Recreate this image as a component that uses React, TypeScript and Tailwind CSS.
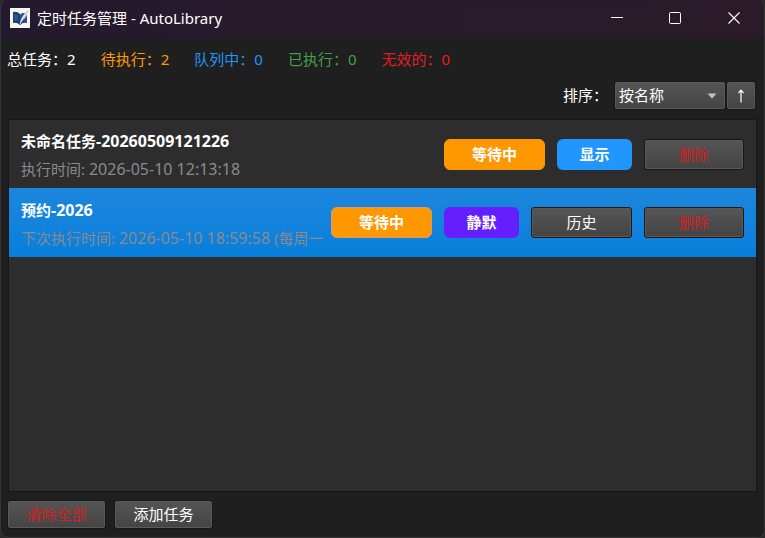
import { useState } from "react";
import { clsx } from "clsx";

type Task = {
  name: string;
  timeLabel: string;
  time: string;
  repeat?: string;
  mode: "显示" | "静默";
  history: boolean;
};

const TASKS: Task[] = [
  {
    name: "未命名任务-20260509121226",
    timeLabel: "执行时间",
    time: "2026-05-10 12:13:18",
    mode: "显示",
    history: false,
  },
  {
    name: "预约-2026",
    timeLabel: "下次执行时间",
    time: "2026-05-10 18:59:58",
    repeat: "(每周一",
    mode: "静默",
    history: true,
  },
];

const STATS = [
  { label: "总任务", value: 2, color: "text-white" },
  { label: "待执行", value: 2, color: "text-[#ff9800]" },
  { label: "队列中", value: 0, color: "text-[#2196f3]" },
  { label: "已执行", value: 0, color: "text-[#43a047]" },
  { label: "无效的", value: 0, color: "text-[#e51c23]" },
];

const BUTTON =
  "shrink-0 rounded-[3px] border border-[#171717] bg-linear-to-b from-[#555555] to-[#444444] text-center inset-ring inset-ring-[#5a5a5a]";

function AppLogo() {
  return (
    <svg width="20" height="20" viewBox="0 0 20 20" aria-hidden="true">
      <rect width="20" height="20" fill="#f6f6ee" />
      <path d="M3 4 Q7 3 10 6 V17 Q7 14 3 15 Z" fill="#1f3f73" />
      <path d="M10 7 Q11 5 13 5 L17 5 V15 Q13 14 10 17 Z" fill="#274f88" />
      <path d="M10 15 Q11 8 18 2 Q18 8 13 12 Z" fill="#b9c8dc" />
      <path d="M10 16 Q12 10 17 4" fill="none" stroke="#f6f6ee" strokeWidth="0.8" />
      <path d="M4 6 L8 7 V13 L4 12 Z" fill="#28548f" />
    </svg>
  );
}

function TitleBar() {
  return (
    <header className="flex h-[37px] items-center bg-linear-to-r from-[#241a2d] to-[#2b1b28] pb-[3px] pl-[9px]">
      <AppLogo />
      <h1 className="flex-1 pl-[7px] text-[15px]">定时任务管理 - AutoLibrary</h1>
      <button aria-label="最小化" className="flex h-full w-[58px] items-center justify-center">
        <svg width="12" height="12" viewBox="0 0 12 12" fill="none" stroke="#fff">
          <path d="M0 5.5 H12" />
        </svg>
      </button>
      <button aria-label="最大化" className="flex h-full w-[58px] items-center justify-center">
        <svg width="12" height="12" viewBox="0 0 12 12" fill="none" stroke="#fff">
          <rect x="0.5" y="0.5" width="11" height="11" rx="1" />
        </svg>
      </button>
      <button aria-label="关闭" className="flex h-full w-[60px] items-center justify-center">
        <svg width="12" height="12" viewBox="0 0 12 12" fill="none" stroke="#fff" strokeWidth="1.1">
          <path d="M0.5 0.5 L11.5 11.5 M11.5 0.5 L0.5 11.5" />
        </svg>
      </button>
    </header>
  );
}

function TaskRow({ task, selected, onSelect }: { task: Task; selected: boolean; onSelect: () => void }) {
  const [title, digits] = task.name.split("-");
  return (
    <li
      onClick={onSelect}
      className={clsx(
        "flex items-center gap-3 px-3",
        selected ? "h-[69px] bg-linear-to-b from-[#1c86dc] to-[#067fdb]" : "h-[68px]"
      )}
    >
      <div className="flex min-w-0 flex-1 flex-col gap-1 pt-[2px] whitespace-nowrap">
        <div className="h-6 leading-6 font-bold">
          {title}
          <span className="text-base leading-6">-{digits}</span>
        </div>
        <div className="h-6 leading-6 text-[#8a8a8e]">
          {task.timeLabel}: <span className="text-base leading-6">{task.time}</span> {task.repeat}
        </div>
      </div>
      <span
        className={clsx(
          "h-[31px] w-[101px] shrink-0 rounded-md border bg-[#ff9800] text-center leading-[29px] font-bold",
          selected ? "border-[#dc9a6c]" : "border-[#ff9800]"
        )}
      >
        等待中
      </span>
      <span
        className={clsx(
          "h-[31px] w-[75px] shrink-0 rounded-md text-center leading-[31px] font-bold",
          task.mode === "显示" ? "bg-[#2196ff]" : "bg-[#651fff]"
        )}
      >
        {task.mode}
      </span>
      {task.history && <button className={clsx(BUTTON, "h-[31px] w-[101px]")}>历史</button>}
      <button className={clsx(BUTTON, "h-[31px] w-[100px] text-[#d32020]")}>删除</button>
    </li>
  );
}

export default function App() {
  const [selected, setSelected] = useState(1);
  const [ascending, setAscending] = useState(true);

  return (
    <div className="bg-[#2b2b2b]">
      <div className="flex min-h-screen flex-col overflow-hidden rounded-lg border border-[#353535] border-t-[#241a2d] bg-[#1f1f1f] font-['Noto_Sans','Noto_Sans_CJK_SC',sans-serif] text-[15px] text-white">
        <TitleBar />
        <main className="flex flex-1 flex-col px-[6px] pb-2">
          <div className="flex h-[43px] items-center gap-[25px]">
            {STATS.map((stat) => (
              <span key={stat.label} className={stat.color}>
                {stat.label}：{stat.value}
              </span>
            ))}
          </div>

          <div className="flex h-[29px] items-center justify-end pr-[2px]">
            <label htmlFor="sort" className="pr-[6px]">
              排序：
            </label>
            <div className="relative">
              <select
                id="sort"
                className="block h-[29px] w-[112px] appearance-none rounded-[3px] border border-[#171717] bg-linear-to-b from-[#555555] to-[#444444] pl-1 inset-ring inset-ring-[#5a5a5a]"
              >
                <option>按名称</option>
                <option>按时间</option>
              </select>
              <svg
                width="10"
                height="6"
                viewBox="0 0 10 6"
                className="pointer-events-none absolute top-3 right-[9px]"
              >
                <path d="M0.5 0.5 H9.5 L5 5.5 Z" fill="#c4c0cc" />
              </svg>
            </div>
            <button
              aria-label="切换排序方向"
              onClick={() => setAscending(!ascending)}
              className={clsx(BUTTON, "flex h-[29px] w-[30px] items-center justify-center")}
            >
              <svg
                width="8"
                height="14"
                viewBox="0 0 8 14"
                fill="none"
                stroke="#fff"
                strokeWidth="1.2"
                className={ascending ? "" : "rotate-180"}
              >
                <path d="M4 13.5 V1.5 M1.5 4 L4 1.2 L6.5 4" />
              </svg>
            </button>
          </div>

          <ul className="mx-px mt-[9px] flex-1 border border-[#171717] bg-[#2d2d2d]">
            {TASKS.map((task, i) => (
              <TaskRow key={task.name} task={task} selected={i === selected} onSelect={() => setSelected(i)} />
            ))}
          </ul>

          <div className="mt-2 flex gap-2">
            <button className={clsx(BUTTON, "h-[29px] w-[99px] text-[#d32020]")}>清除全部</button>
            <button className={clsx(BUTTON, "h-[29px] w-[99px]")}>添加任务</button>
          </div>
        </main>
      </div>
    </div>
  );
}
